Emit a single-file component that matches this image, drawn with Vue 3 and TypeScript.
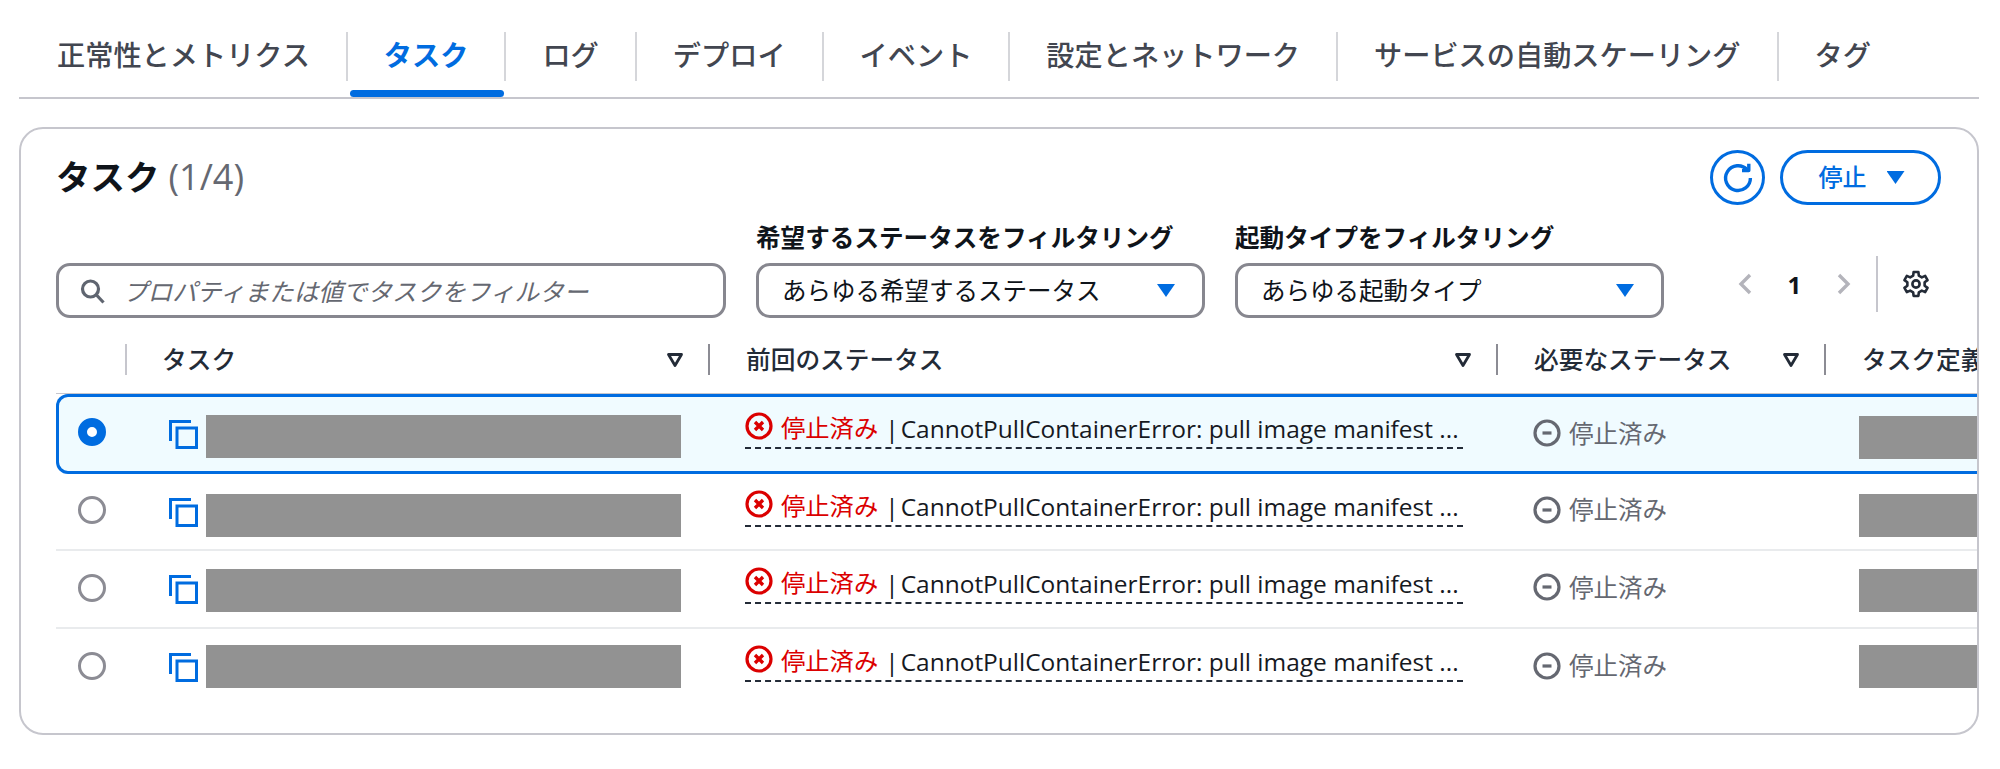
<script setup lang="ts">
const tabs: string[] = ['正常性とメトリクス', 'タスク', 'ログ', 'デプロイ', 'イベント', '設定とネットワーク', 'サービスの自動スケーリング', 'タグ']

interface Row { id: number; selected: boolean; maskTop: number; mask2Top: number }
const rows: Row[] = [
  { id: 1, selected: true, maskTop: 19, mask2Top: 20 },
  { id: 2, selected: false, maskTop: 20, mask2Top: 20 },
  { id: 3, selected: false, maskTop: 18, mask2Top: 18 },
  { id: 4, selected: false, maskTop: 16.5, mask2Top: 16.5 },
]

function gearPath(): string {
  const teeth = 6
  const cx = 14, cy = 14, outer = 12.2, inner = 8.8
  const pts: string[] = []
  for (let i = 0; i < teeth; i++) {
    const a = (i / teeth) * Math.PI * 2 - Math.PI / 2
    const w = Math.PI / teeth
    const p = (r: number, t: number) => `${(cx + r * Math.cos(t)).toFixed(2)} ${(cy + r * Math.sin(t)).toFixed(2)}`
    pts.push(`${i === 0 ? 'M' : 'L'}${p(inner, a - w * 0.62)}`)
    pts.push(`L${p(outer, a - w * 0.38)}`)
    pts.push(`L${p(outer, a + w * 0.38)}`)
    pts.push(`L${p(inner, a + w * 0.62)}`)
  }
  return pts.join(' ') + ' Z'
}
const gear = gearPath()
</script>

<template>
  <div class="page">
    <nav class="tabs">
      <div v-for="(t, i) in tabs" :key="t" class="tab" :class="{ active: i === 1, first: i === 0 }">{{ t }}</div>
    </nav>

    <section class="card">
      <header class="card-head">
        <h2 class="title">タスク <span class="count">(1/4)</span></h2>
        <div class="actions">
          <button class="icon-btn" aria-label="更新">
            <svg width="32" height="32" viewBox="0 0 16 16" fill="none" stroke="#006ce0" stroke-width="1.7" stroke-linejoin="round">
              <path d="M14.2 8A6.2 6.2 0 1 1 12.6 3.9" />
              <path d="M13.4 0.9V4.3H10" />
            </svg>
          </button>
          <button class="stop-btn"><span class="stop-t">停止</span><span class="caret"></span></button>
        </div>
      </header>

      <div class="filters">
        <div class="search">
          <svg width="28" height="28" viewBox="0 0 28 28" fill="none" stroke="#5f6570" stroke-width="3.2">
            <circle cx="12.5" cy="12" r="8" />
            <path d="M18.5 18l7 7.5" />
          </svg>
          <span class="placeholder">プロパティまたは値でタスクをフィルター</span>
        </div>
        <div class="field w1">
          <label class="lbl">希望するステータスをフィルタリング</label>
          <div class="select"><span class="sel-t">あらゆる希望するステータス</span><span class="caret"></span></div>
        </div>
        <div class="field w2">
          <label class="lbl">起動タイプをフィルタリング</label>
          <div class="select"><span class="sel-t">あらゆる起動タイプ</span><span class="caret"></span></div>
        </div>
        <div class="pager">
          <span class="slot">
            <svg width="18" height="26" viewBox="0 0 18 26" fill="none" stroke="#b4b4bb" stroke-width="3.4"><path d="M14 4l-9 9 9 9" /></svg>
          </span>
          <span class="slot num">1</span>
          <span class="slot">
            <svg width="18" height="26" viewBox="0 0 18 26" fill="none" stroke="#b4b4bb" stroke-width="3.4"><path d="M4 4l9 9-9 9" /></svg>
          </span>
          <span class="vdiv"></span>
          <svg class="gear" width="28" height="28" viewBox="0 0 28 28" fill="none" stroke="#232b37" stroke-width="2.6" stroke-linejoin="round">
            <path :d="gear" />
            <circle cx="14" cy="14" r="3.6" />
          </svg>
        </div>
      </div>

      <div class="table-wrap">
        <div class="thead grid">
          <div class="th th0"></div>
          <div class="th th1"><span class="th-t">タスク</span><svg class="sort" width="18" height="16" viewBox="0 0 18 16" fill="none" stroke="#232b37" stroke-width="2.8" stroke-linejoin="round"><path d="M2.5 2.5h13L9 13.5z" /></svg></div>
          <div class="th th2"><span class="th-t">前回のステータス</span><svg class="sort" width="18" height="16" viewBox="0 0 18 16" fill="none" stroke="#232b37" stroke-width="2.8" stroke-linejoin="round"><path d="M2.5 2.5h13L9 13.5z" /></svg></div>
          <div class="th th3"><span class="th-t">必要なステータス</span><svg class="sort" width="18" height="16" viewBox="0 0 18 16" fill="none" stroke="#232b37" stroke-width="2.8" stroke-linejoin="round"><path d="M2.5 2.5h13L9 13.5z" /></svg></div>
          <div class="th th4"><span class="th-t">タスク定義</span></div>
        </div>

        <div v-for="r in rows" :key="r.id" class="row grid" :class="{ selected: r.selected, sep: r.id === 2 || r.id === 3 }">
          <div class="c0"><span class="radio" :class="{ on: r.selected }"></span></div>
          <div class="c1">
            <svg class="copy" width="29" height="29" viewBox="0 0 29 29" fill="none" stroke="#006ce0" stroke-width="3">
              <path d="M1.5 21V1.5H22" />
              <rect x="8" y="8" width="19.5" height="19.5" />
            </svg>
            <div class="mask m1" :style="{ marginTop: r.maskTop + 'px' }"></div>
          </div>
          <div class="c2">
            <div class="err">
              <svg width="28" height="28" viewBox="0 0 28 28" fill="none" stroke="#db0000" stroke-width="3.2">
                <circle cx="14" cy="14" r="12" />
                <path d="M10 10l8 8M18 10l-8 8" stroke-width="3.4" />
              </svg>
              <span class="err-t">停止済み</span>
              <span class="err-p">|</span>
              <span class="err-d">CannotPullContainerError: pull image manifest ...</span>
            </div>
          </div>
          <div class="c3">
            <svg width="28" height="28" viewBox="0 0 28 28" fill="none" stroke="#656871" stroke-width="3.2">
              <circle cx="14" cy="14" r="12" />
              <path d="M9.5 14h9" />
            </svg>
            <span class="stopped">停止済み</span>
          </div>
          <div class="c4">
            <div class="mask m2" :style="{ marginTop: r.mask2Top + 'px' }"></div>
          </div>
        </div>
      </div>
    </section>
  </div>
</template>

<style>
html, body { background: #ffffff; }
</style>

<style scoped>
.page {
  padding: 32px 21px 0 19px;
  font-family: "Open Sans", "Noto Sans CJK JP", sans-serif;
  color: #0f141a;
}
.tabs {
  display: flex;
  border-bottom: 2px solid #c6c6cd;
  height: 65px;
}
.tab {
  position: relative;
  height: 49px;
  line-height: 47px;
  padding: 0 36px;
  font-size: 28.2px;
  font-weight: 500;
  color: #424650;
  border-left: 2px solid #d5d6da;
  white-space: nowrap;
}
.tab.first { border-left: 2px solid transparent; padding-left: 36px; }
.tab.active { color: #006ce0; font-weight: 700; }
.tab.active::after {
  content: "";
  position: absolute;
  left: 2px;
  right: 0;
  bottom: -16px;
  height: 7px;
  background: #006ce0;
  border-radius: 4px;
}

.card {
  margin-top: 28px;
  border: 2px solid #c6c6cd;
  border-radius: 24px;
  padding: 21px 0 27px 35px;
  overflow: hidden;
  background: #fff;
}
.card-head {
  display: flex;
  justify-content: space-between;
  align-items: center;
  height: 55px;
  margin-right: 36px;
}
.title {
  margin: -5px 0 0;
  font-size: 34.5px;
  font-weight: 700;
  color: #0f141a;
}
.count { font-weight: 500; color: #656871; font-size: 36px; }
.actions { display: flex; gap: 15px; }
.icon-btn {
  width: 55px;
  height: 55px;
  padding: 0;
  border: 3px solid #006ce0;
  border-radius: 50%;
  background: #fff;
  display: flex;
  align-items: center;
  justify-content: center;
}
.stop-btn {
  width: 161px;
  height: 55px;
  border: 3px solid #006ce0;
  border-radius: 28px;
  background: #fff;
  color: #006ce0;
  font-family: inherit;
  font-size: 24px;
  font-weight: 500;
  display: flex;
  align-items: center;
  justify-content: center;
  gap: 20px;
  padding: 0 0 0 2px;
}
.stop-t { margin-top: -4px; }
.caret {
  display: inline-block;
  width: 18px;
  height: 13px;
  background: #006ce0;
  clip-path: polygon(0 0, 100% 0, 50% 100%);
}

.filters {
  display: flex;
  align-items: flex-end;
  gap: 30px;
  margin-top: 17px;
}
.search {
  width: 670px;
  height: 55px;
  box-sizing: border-box;
  border: 3px solid #87878f;
  border-radius: 14px;
  display: flex;
  align-items: center;
  padding-left: 19px;
  gap: 17px;
}
.placeholder {
  font-size: 24.6px;
  font-style: italic;
  color: #656871;
  white-space: nowrap;
  margin-top: -2px;
}
.field { display: flex; flex-direction: column; gap: 9px; }
.w1 { width: 449px; }
.w2 { width: 429px; }
.lbl {
  font-size: 24.6px;
  line-height: 32px;
  font-weight: 700;
  color: #0f141a;
  white-space: nowrap;
}
.select {
  height: 55px;
  box-sizing: border-box;
  border: 3px solid #87878f;
  border-radius: 14px;
  display: flex;
  align-items: center;
  justify-content: space-between;
  padding: 0 27px 0 23px;
  font-size: 24.5px;
  color: #0f141a;
  white-space: nowrap;
}
.sel-t { margin-top: -3px; }
.pager {
  display: flex;
  align-items: center;
  height: 56px;
  margin-left: 26px;
  margin-bottom: 6px;
}
.slot {
  width: 49.5px;
  display: flex;
  justify-content: center;
  align-items: center;
}
.num { font-size: 24px; font-weight: 700; color: #0f141a; }
.vdiv {
  width: 2px;
  height: 56px;
  background: #c6c6cd;
  margin-left: 7px;
}
.gear { margin-left: 24px; }

.grid {
  display: grid;
  grid-template-columns: 69px 583px 788px 328px 400px;
  width: 2168px;
}
.table-wrap { margin-top: 26px; }
.thead {
  height: 31px;
  padding-bottom: 18px;
  border-bottom: 1px solid #c6c6cd;
}
.th {
  height: 31px;
  border-left: 2.5px solid #8c8c94;
  display: flex;
  align-items: center;
  justify-content: space-between;
  font-size: 24.7px;
  font-weight: 500;
  color: #232b37;
  white-space: nowrap;
  padding-right: 24px;
  box-sizing: border-box;
}
.th-t { margin-top: -3px; }
.th0 { border-left: none; border-right: 2px solid #c6c6cd; margin-right: -2px; }
.th1 { padding-left: 35px; border-left-color: #c6c6cd; }
.th2, .th3, .th4 { padding-left: 36px; }

.row {
  height: 77.5px;
  box-sizing: border-box;
}
.row.selected {
  height: 79.5px;
  padding-top: 2px;
  background: #f0fbff;
  box-shadow: inset 0 0 0 3px #006ce0;
  border-radius: 12px 0 0 12px;
}
.row.sep { border-bottom: 2px solid #e9ebed; }
.c0 {
  display: flex;
  align-items: center;
  padding-left: 21.5px;
  padding-bottom: 2px;
}
.selected .c0 { padding-bottom: 6px; }
.radio {
  display: block;
  width: 28px;
  height: 28px;
  box-sizing: border-box;
  border: 3px solid #8c8c94;
  border-radius: 50%;
  background: #fff;
}
.radio.on { border: 9px solid #006ce0; }
.c1 {
  display: flex;
  align-items: flex-start;
  padding-left: 43.5px;
  gap: 8.5px;
}
.copy { margin-top: 24px; }
.mask { background: #929292; height: 43px; }
.m1 { width: 475px; }
.m2 { width: 240px; }
.c2 { padding-left: 37px; }
.err {
  width: 718px;
  height: 38px;
  margin-top: 15px;
  box-sizing: border-box;
  border-bottom: 2px dashed #232b37;
  display: flex;
  align-items: flex-start;
  white-space: nowrap;
}
.err svg { margin-right: 8px; flex: none; margin-top: 1px; }
.err-t { color: #db0000; font-size: 24.3px; line-height: 33px; margin-right: 7px; }
.err-p { color: #0f141a; font-size: 24.5px; line-height: 36px; font-weight: 500; margin-right: 2px; }
.err-d { color: #16191f; line-height: 36px; font-size: 24.47px; }
.c3 {
  display: flex;
  align-items: center;
  padding-left: 37px;
  padding-bottom: 3px;
  gap: 8px;
}
.stopped { font-size: 24.5px; color: #656871; margin-top: -2px; }
.c4 { padding-left: 35px; }
</style>
